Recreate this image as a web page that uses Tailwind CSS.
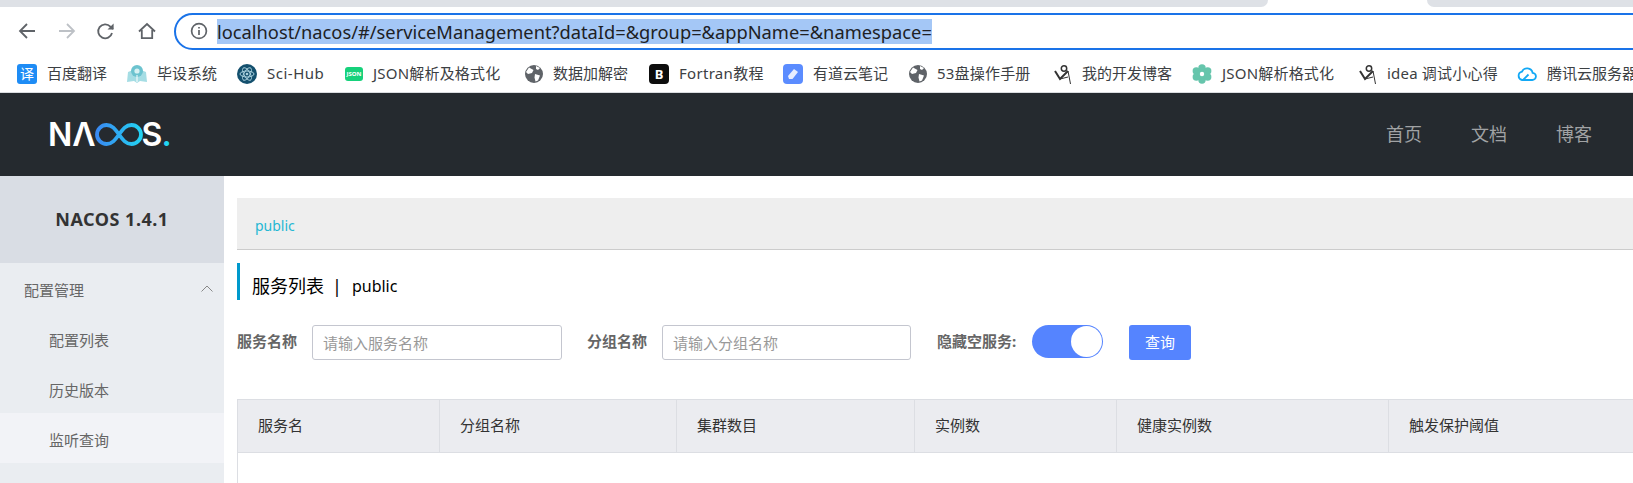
<!DOCTYPE html>
<html lang="zh-CN">
<head>
  <meta charset="UTF-8" />
  <title>Nacos</title>
  <script src="https://cdn.jsdelivr.net/npm/@tailwindcss/browser@4"></script>
</head>
<body class="w-[1633px] h-[483px] overflow-hidden bg-white font-['Noto_Sans','Noto_Sans_CJK_SC',sans-serif]">

  <!-- tab strip -->
  <div class="flex h-[7px]">
    <div class="flex-1 bg-[#dee1e6] rounded-br-lg"></div>
    <div class="w-[159px] bg-white"></div>
    <div class="w-[206px] bg-[#dee1e6] rounded-bl-lg"></div>
  </div>

  <!-- toolbar -->
  <div class="flex items-center h-[48px] pl-[17px] overflow-hidden">
    <svg class="w-5 h-5 shrink-0" viewBox="0 0 20 20" fill="none" stroke="#5f6368" stroke-width="1.8"><path d="M18 10H3M10 3l-7 7 7 7"/></svg>
    <svg class="w-5 h-5 ml-[20px] shrink-0" viewBox="0 0 20 20" fill="none" stroke="#bdc1c6" stroke-width="1.8"><path d="M2 10h15M10 3l7 7-7 7"/></svg>
    <svg class="w-5 h-5 ml-[19px] shrink-0" viewBox="0 0 20 20" fill="none" stroke="#5f6368" stroke-width="1.8"><path d="M16 12a7 7 0 1 1-1.6-6.4L17 8"/><path d="M17.6 2.5v6.1h-6.1z" fill="#5f6368" stroke="none"/></svg>
    <svg class="w-5 h-5 ml-[21px] shrink-0" viewBox="0 0 20 20" fill="none" stroke="#5f6368" stroke-width="1.8"><path d="M2 10.5 10 3l8 7.5M4.8 9v8.2h10.4V9"/></svg>
    <div class="flex items-center h-[37px] ml-[17px] w-[1500px] shrink-0 border-2 border-[#1a73e8] rounded-full pl-[14px]">
      <svg class="w-[18px] h-[18px] shrink-0" viewBox="0 0 18 18" fill="none" stroke="#5f6368" stroke-width="1.7"><circle cx="9" cy="9" r="7.4"/><path d="M9 8v5M9 5v1.6"/></svg>
      <span class="ml-[9px] h-[25px] leading-[25px] text-[18.3px] text-[#202124] bg-[#a4c7f6] whitespace-nowrap">localhost/nacos/#/serviceManagement?dataId=&amp;group=&amp;appName=&amp;namespace=</span>
    </div>
  </div>

  <!-- bookmarks -->
  <div class="flex items-center gap-[20px] h-[38px] pl-[17px] border-b border-[#dadce0] text-[15px] text-[#3c4043] whitespace-nowrap overflow-hidden">
    <div class="flex items-center gap-[10px]">
      <span class="w-5 h-5 rounded-[3px] bg-[#1e8cf5] text-white text-[14px] leading-5 text-center">译</span>
      <span class="w-[60px]">百度翻译</span>
    </div>
    <div class="flex items-center gap-[10px]">
      <svg class="w-5 h-5" viewBox="0 0 20 20"><path d="M0 18 1 8l5-2 4 3 4-3 5 2 1 10-7-1-3 2-3-2z" fill="#a5dde4"/><circle cx="10" cy="7" r="6" fill="#6cc3cf"/><circle cx="10" cy="7" r="2.600" fill="#d6f1f3"/><path d="M10 11v7" stroke="#fff"/></svg>
      <span class="w-[60px]">毕设系统</span>
    </div>
    <div class="flex items-center gap-[10px]">
      <svg class="w-5 h-5" viewBox="0 0 20 20"><circle cx="10" cy="10" r="10" fill="#14506e"/><g fill="none" stroke="#a8cfdc" stroke-width="1"><ellipse cx="10" cy="10" rx="7" ry="3"/><ellipse cx="10" cy="10" rx="7" ry="3" transform="rotate(60 10 10)"/><ellipse cx="10" cy="10" rx="7" ry="3" transform="rotate(120 10 10)"/></g><circle cx="10" cy="10" r="1.3" fill="#a8cfdc"/></svg>
      <span class="w-[58px] tracking-[0.5px]">Sci-Hub</span>
    </div>
    <div class="flex items-center gap-[10px]">
      <span class="w-[18px] h-[14px] rounded-[3px] bg-[#16d17b] text-white text-[6px] leading-[14px] text-center font-bold">JSON</span>
      <span class="w-[132px] tracking-[0.2px]">JSON解析及格式化</span>
    </div>
    <div class="flex items-center gap-[10px]">
      <svg class="w-[18px] h-[18px]" viewBox="0 0 18 18"><circle cx="9" cy="9" r="9" fill="#5f6368"/><path d="M4 2.5 8.500 5 7 8 3 9 1 7zM10 9l5 1.500-2 5-2.500 1-1-4zM11 1l4 2-2 2-2-1z" fill="#fff"/></svg>
      <span class="w-[76px]">数据加解密</span>
    </div>
    <div class="flex items-center gap-[10px]">
      <span class="w-5 h-5 rounded-[4px] bg-[#0d0d0d] text-white text-[13px] leading-5 text-center font-bold">B</span>
      <span class="w-[84px] tracking-[0.3px]">Fortran教程</span>
    </div>
    <div class="flex items-center gap-[10px]">
      <svg class="w-5 h-5" viewBox="0 0 20 20"><rect width="20" height="20" rx="4" fill="#5b8cff"/><path d="m5 12 6-7 4 3-5.500 7H6z" fill="#e8eeff"/></svg>
      <span class="w-[76px]">有道云笔记</span>
    </div>
    <div class="flex items-center gap-[10px]">
      <svg class="w-[18px] h-[18px]" viewBox="0 0 18 18"><circle cx="9" cy="9" r="9" fill="#5f6368"/><path d="M4 2.5 8.500 5 7 8 3 9 1 7zM10 9l5 1.500-2 5-2.500 1-1-4zM11 1l4 2-2 2-2-1z" fill="#fff"/></svg>
      <span class="w-[97px] tracking-[0.2px]">53盘操作手册</span>
    </div>
    <div class="flex items-center gap-[10px]">
      <svg class="w-[18px] h-5" viewBox="0 0 18 20" fill="none" stroke="#333"><circle cx="10" cy="4.500" r="2.700" stroke-width="1.5"/><path d="M1 7 6 15l8-8" stroke-width="2"/><path d="m14 7 2.500 13M6 15l8-2" stroke-width="1"/></svg>
      <span class="w-[90px]">我的开发博客</span>
    </div>
    <div class="flex items-center gap-[10px]">
      <svg class="w-5 h-5" viewBox="0 0 20 20"><g fill="#66c5ac"><circle cx="10" cy="4" r="3.700"/><circle cx="10" cy="16" r="3.700"/><circle cx="4.300" cy="7" r="3.700"/><circle cx="15.700" cy="7" r="3.700"/><circle cx="4.300" cy="13" r="3.700"/><circle cx="15.700" cy="13" r="3.700"/><circle cx="10" cy="10" r="5"/></g><circle cx="10" cy="10" r="2.200" fill="#fff"/></svg>
      <span class="w-[117px] tracking-[0.2px]">JSON解析格式化</span>
    </div>
    <div class="flex items-center gap-[10px]">
      <svg class="w-[18px] h-5" viewBox="0 0 18 20" fill="none" stroke="#333"><circle cx="10" cy="4.500" r="2.700" stroke-width="1.5"/><path d="M1 7 6 15l8-8" stroke-width="2"/><path d="m14 7 2.500 13M6 15l8-2" stroke-width="1"/></svg>
      <span class="w-[110px] tracking-[0.2px]">idea 调试小心得</span>
    </div>
    <div class="flex items-center gap-[10px]">
      <svg class="w-5 h-5" viewBox="0 0 20 20" fill="none" stroke="#12a8f5" stroke-width="1.8"><path d="M5 16h10a3.600 3.600 0 0 0 .6-7.200A5.600 5.600 0 0 0 5 7.600 4.300 4.300 0 0 0 5 16zM6 16l5.500-5.500"/></svg>
      <span>腾讯云服务器</span>
    </div>
  </div>

  <!-- nacos header -->
  <header class="flex items-center justify-between h-[83px] bg-[#252a2f] pl-[48px] pr-[41px]">
    <div class="flex items-center h-[30px] text-white text-[32px] leading-none font-semibold font-['Inter',sans-serif]">
      <span>N</span><span>Λ</span>
      <svg class="w-[48px] h-[23px] -ml-[1px]" viewBox="0 0 48 23" fill="none" stroke-width="3.800">
        <defs><linearGradient id="inf" gradientUnits="userSpaceOnUse" x1="0" x2="48" y1="0" y2="0"><stop offset="0" stop-color="#3a86f2"/><stop offset="1" stop-color="#22d5f2"/></linearGradient></defs>
        <path stroke="url(#inf)" d="M24 11.500C20 6 17 2 11.500 2a9.500 9.500 0 0 0 0 19C17 21 20 17 24 11.500S31 2 36.500 2a9.500 9.500 0 0 1 0 19C31 21 28 17 24 11.500z"/>
      </svg>
      <span class="-ml-[1px]">S</span><span class="-ml-[1px] text-[#22d5f2]">.</span>
    </div>
    <nav class="flex gap-[49px] text-[18px] text-[#a0a2a4]">
      <span>首页</span>
      <span>文档</span>
      <span>博客</span>
    </nav>
  </header>

  <div class="flex h-[307px] overflow-hidden">
    <!-- sidebar -->
    <aside class="w-[224px] shrink-0 bg-[#eaedf1] text-[15px] text-[#666]">
      <div class="flex items-center justify-center h-[87px] bg-[#d9dde4] text-[18px] tracking-[0.5px] font-bold text-[#333]">NACOS 1.4.1</div>
      <div class="flex items-center justify-between h-[50px] pl-[24px] pr-[11px] pt-[5px]">
        <span>配置管理</span>
        <svg class="w-[12px] h-[7px] -mt-[5px]" viewBox="0 0 12 7" fill="none" stroke="#888" stroke-width="1"><path d="M.5 6.500 6 1l5.500 5.500"/></svg>
      </div>
      <div class="flex items-center h-[50px] pl-[49px] pt-[5px]">配置列表</div>
      <div class="flex items-center h-[50px] pl-[49px] pt-[5px]">历史版本</div>
      <div class="flex items-center h-[50px] pl-[49px] pt-[5px] bg-[#f2f3f7]">监听查询</div>
    </aside>

    <!-- main -->
    <main class="flex-1 pl-[13px] pt-[22px] min-w-0">
      <div class="flex items-center h-[52px] pl-[18px] pt-[3px] bg-[#eeeeee] border-b border-[#cccccc] text-[14px] text-[#25b7d3]">public</div>

      <div class="flex items-center h-[37px] mt-[13px] pl-[12px] pt-[9px] border-l-[3px] border-[#0099cc] text-[18px] text-black">
        <span>服务列表</span><span class="ml-[8px]">|</span><span class="ml-[10px] text-[16px]">public</span>
      </div>

      <form class="flex items-center h-[35px] mt-[25px] text-[15px] text-[#666]">
        <label class="w-[75px] -mt-[2px] font-bold">服务名称</label>
        <input type="text" placeholder="请输入服务名称" class="w-[250px] h-[35px] px-[10px] border border-[#c4c6cf] rounded-[3px] placeholder:text-[#999]" />
        <label class="w-[75px] ml-[25px] -mt-[2px] font-bold">分组名称</label>
        <input type="text" placeholder="请输入分组名称" class="w-[249px] h-[35px] px-[10px] border border-[#c4c6cf] rounded-[3px] placeholder:text-[#999]" />
        <label class="w-[95px] ml-[26px] -mt-[2px] font-bold">隐藏空服务:</label>
        <div class="flex justify-end items-center w-[71px] h-[33px] -mt-[2px] p-[1px] rounded-full bg-[#5584ff]">
          <span class="w-[31px] h-[31px] rounded-full bg-white"></span>
        </div>
        <button type="button" class="w-[62px] h-[35px] ml-[26px] rounded-[3px] bg-[#5584ff] text-white">查询</button>
      </form>

      <div class="mt-[39px] h-[200px] border-l border-[#dcdee3]">
        <div class="flex h-[54px] items-center bg-[#ebecf0] border-y border-[#dcdee3] text-[15px] text-[#333]">
          <div class="w-[202px] h-full flex items-center pl-5 pb-[2px] border-r border-[#dcdee3]">服务名</div>
          <div class="w-[237px] h-full flex items-center pl-5 pb-[2px] border-r border-[#dcdee3]">分组名称</div>
          <div class="w-[238px] h-full flex items-center pl-5 pb-[2px] border-r border-[#dcdee3]">集群数目</div>
          <div class="w-[202px] h-full flex items-center pl-5 pb-[2px] border-r border-[#dcdee3]">实例数</div>
          <div class="w-[272px] h-full flex items-center pl-5 pb-[2px] border-r border-[#dcdee3]">健康实例数</div>
          <div class="flex-1 h-full flex items-center pl-5 pb-[2px]">触发保护阈值</div>
        </div>
      </div>
    </main>
  </div>

</body>
</html>
